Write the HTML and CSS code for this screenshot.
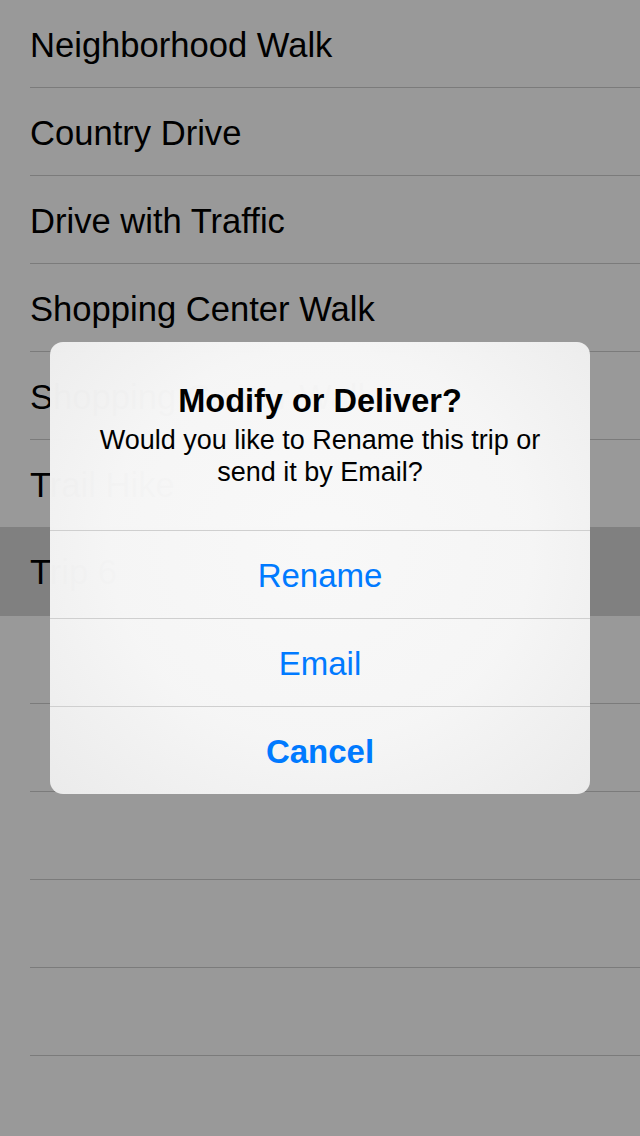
FILE: index.html
```html
<!DOCTYPE html>
<html>
<head>
<meta charset="utf-8">
<link rel="stylesheet" href="styles.css">
</head>
<body>
<div class="screen">
  <ul class="list">
    <li class="row"><div class="cell">Neighborhood Walk</div></li>
    <li class="row"><div class="cell">Country Drive</div></li>
    <li class="row"><div class="cell">Drive with Traffic</div></li>
    <li class="row"><div class="cell">Shopping Center Walk</div></li>
    <li class="row"><div class="cell">Shopping Center Walk</div></li>
    <li class="row"><div class="cell">Trail Hike</div></li>
    <li class="row selected"><div class="cell">Trip 6</div></li>
    <li class="row"><div class="cell"></div></li>
    <li class="row"><div class="cell"></div></li>
    <li class="row"><div class="cell"></div></li>
    <li class="row"><div class="cell"></div></li>
    <li class="row"><div class="cell"></div></li>
    <li class="row"><div class="cell"></div></li>
  </ul>
  <div class="alert">
    <div class="alert-head">
      <div class="alert-title">Modify or Deliver?</div>
      <div class="alert-msg">Would you like to Rename this trip or<br>send it by Email?</div>
    </div>
    <div class="alert-btn">Rename</div>
    <div class="alert-btn">Email</div>
    <div class="alert-btn bold">Cancel</div>
  </div>
</div>
</body>
</html>
```
FILE: styles.css
```css
html, body {
  margin: 0;
  padding: 0;
  background: #999999;
  font-family: "Liberation Sans", Arial, sans-serif;
}
.screen {
  position: relative;
  width: 640px;
  height: 1136px;
  overflow: hidden;
  background: #999999;
}
.list {
  list-style: none;
  margin: 0;
  padding: 0;
}
.row {
  padding-left: 30px;
  height: 88px;
  box-sizing: border-box;
}
.row.selected {
  background: #808080;
  margin-top: -1px;
  height: 89px;
}
.cell {
  height: 88px;
  box-sizing: border-box;
  border-bottom: 1px solid #7b7b7b;
  display: flex;
  align-items: center;
  padding-top: 2px;
  font-size: 34.6px;
  line-height: 34px;
  color: #000;
}
.row.selected .cell {
  height: 89px;
  border-bottom: none;
  padding-top: 1px;
}
.alert {
  position: absolute;
  left: 50px;
  top: 342px;
  width: 540px;
  border-radius: 13px;
  overflow: hidden;
  background: radial-gradient(ellipse at 50% 45%, rgba(250,250,250,0.985) 0%, rgba(247,247,247,0.985) 55%, rgba(236,236,236,0.985) 100%);
  text-align: center;
}
.alert-head {
  padding: 40px 20px 0;
  height: 188px;
  box-sizing: border-box;
}
.alert-title {
  font-size: 32.5px;
  line-height: 39px;
  font-weight: bold;
  color: #000;
}
.alert-msg {
  margin-top: 3px;
  font-size: 27px;
  line-height: 32px;
  color: #000;
}
.alert-btn {
  height: 88px;
  box-sizing: border-box;
  border-top: 1px solid #cfcfcf;
  display: flex;
  align-items: center;
  justify-content: center;
  padding-top: 1px;
  font-size: 33px;
  line-height: 33px;
  color: #007aff;
}
.alert-btn.bold {
  font-weight: bold;
}
```
